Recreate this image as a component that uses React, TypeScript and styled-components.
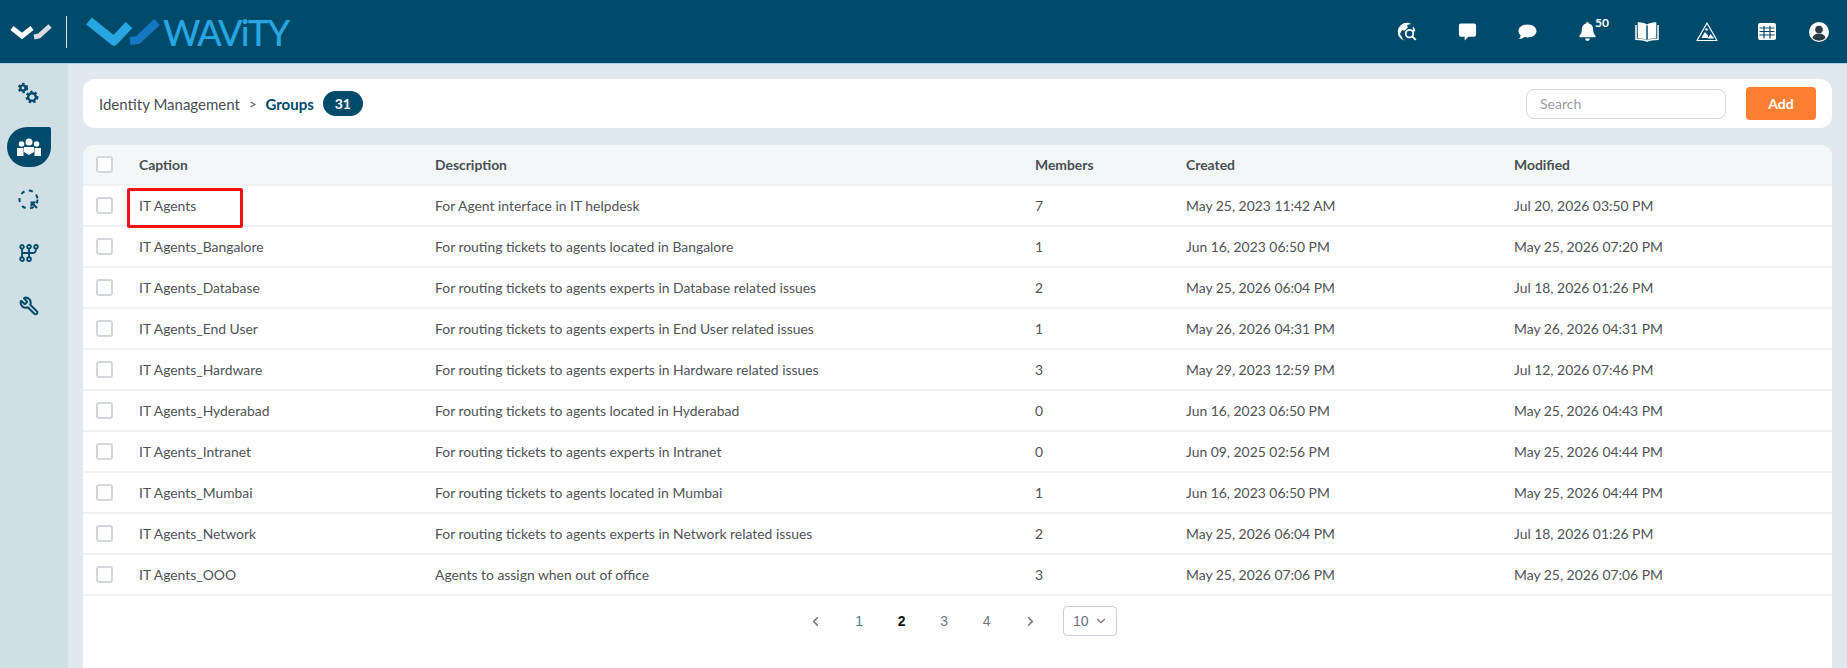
import React from 'react'
import styled, { createGlobalStyle } from 'styled-components'
import { ChevronLeft, ChevronRight, ChevronDown, Wrench } from 'lucide-react'

const GlobalStyle = createGlobalStyle`
  html, body { margin: 0; padding: 0; height: 100%; }
  body { font-family: Lato, "Open Sans", sans-serif; background: #e0e9ef; overflow: hidden; }
  * { box-sizing: border-box; }
`

const Page = styled.div`
  width: 1847px;
  height: 668px;
  display: flex;
  flex-direction: column;
  overflow: hidden;
`

const TopBar = styled.header`
  height: 64px;
  flex: none;
  background: #004b6b;
  border-bottom: 1px solid #a9d6e8;
  display: flex;
  align-items: center;
  justify-content: space-between;
  padding: 0 16px 0 10px;
`

const LogoGroup = styled.div`
  display: flex;
  align-items: center;
`

const LogoDivider = styled.div`
  width: 1px;
  height: 32px;
  background: #d5dde2;
  margin: 0 19px 0 14px;
`

const BrandName = styled.span`
  font-family: Lato, sans-serif;
  font-size: 36px;
  font-weight: 500;
  line-height: 40px;
  letter-spacing: -1.7px;
  color: #27a6e1;
  margin-left: 3px;
`

const IconBar = styled.div`
  display: flex;
  align-items: center;
  height: 100%;
`

const TopIcon = styled.div<{ $left: number }>`
  width: 24px;
  height: 24px;
  margin-left: ${p => p.$left}px;
  position: relative;
  display: flex;
  align-items: center;
  justify-content: center;
`

const BellCount = styled.span`
  position: absolute;
  left: 20px;
  top: -5px;
  font-size: 12px;
  font-weight: 700;
  color: #fff;
`

const Body = styled.div`
  flex: 1;
  display: flex;
  min-height: 0;
`

const SideBar = styled.nav`
  width: 68px;
  flex: none;
  background: #d0dee5;
  display: flex;
  flex-direction: column;
  align-items: flex-start;
  padding-top: 10px;
  gap: 13px;
`

const SideItem = styled.div<{ $active?: boolean }>`
  width: 44px;
  height: 40px;
  margin-left: 7px;
  display: flex;
  align-items: center;
  justify-content: center;
  color: #004b6b;
  background: ${p => (p.$active ? '#004b6b' : 'transparent')};
  border-radius: 20px 2px 20px 20px;
`

const FlippedWrench = styled(Wrench)`
  transform: scaleX(-1);
`

const Main = styled.main`
  flex: 1;
  padding: 15px 15px 0;
  display: flex;
  flex-direction: column;
  gap: 17px;
  min-width: 0;
`

const HeaderCard = styled.div`
  height: 49px;
  flex: none;
  background: #fff;
  border-radius: 12px;
  display: flex;
  align-items: center;
  padding: 0 16px;
`

const Crumb = styled.span`
  font-size: 15px;
  color: #4a4f55;
`

const CrumbSep = styled.span`
  font-size: 13px;
  color: #4a4f55;
  margin: 0 9px 0 9px;
`

const CrumbCurrent = styled.span`
  font-size: 15px;
  font-weight: 700;
  color: #004b6b;
`

const CountBadge = styled.span`
  margin-left: 9px;
  width: 40px;
  height: 25px;
  border-radius: 13px;
  background: #004b6b;
  color: #fff;
  font-size: 14px;
  font-weight: 700;
  display: flex;
  align-items: center;
  justify-content: center;
`

const SearchInput = styled.input`
  margin-left: auto;
  width: 200px;
  height: 30px;
  border: 1px solid #d3d6da;
  border-radius: 8px;
  padding: 0 13px;
  font-family: inherit;
  font-size: 14px;
  color: #4a4f55;
  outline: none;
  &::placeholder { color: #9a9ea3; }
`

const AddButton = styled.button`
  margin-left: 20px;
  width: 70px;
  height: 33px;
  border: none;
  border-radius: 4px;
  background: #ff7f32;
  color: #fff;
  font-family: inherit;
  font-size: 14px;
  font-weight: 700;
`

const TableCard = styled.section`
  flex: 1;
  background: #fff;
  border-radius: 12px 12px 0 0;
  overflow: hidden;
`

const Row = styled.div<{ $head?: boolean }>`
  display: grid;
  grid-template-columns: 56px 296px 600px 151px 328px 1fr;
  align-items: center;
  height: 41px;
  background: ${p => (p.$head ? '#f3f7f8' : '#fff')};
  border-bottom: 2px solid #edf1f4;
  font-size: 13.9px;
  color: ${p => (p.$head ? '#4a4f55' : '#4f5358')};
  font-weight: ${p => (p.$head ? 700 : 400)};
`

const Box = styled.span`
  width: 17px;
  height: 17px;
  margin-left: 13px;
  border: 2px solid #d3d7dc;
  border-radius: 3px;
  background: #fff;
  display: block;
`

const CaptionCell = styled.div`
  position: relative;
`

const Highlight = styled.div`
  position: absolute;
  left: -12px;
  top: -9px;
  width: 116px;
  height: 40px;
  border: 3px solid #f50f16;
  border-radius: 2px;
`

const Pager = styled.div`
  display: flex;
  align-items: center;
  justify-content: center;
  padding: 10px 0 0 0;
  margin-left: -5px;
  font-family: "Liberation Sans", Arial, sans-serif;
`

const PageArrow = styled.span`
  width: 45px;
  display: flex;
  justify-content: center;
  color: #6d7480;
`

const PageNumber = styled.span<{ $current?: boolean; $link?: boolean }>`
  width: 42.5px;
  text-align: center;
  font-size: 14px;
  font-weight: ${p => (p.$current ? 700 : 400)};
  color: ${p => (p.$current ? '#111' : p.$link ? '#4a7a96' : '#6d7480')};
`

const PageSize = styled.div`
  width: 54px;
  height: 30px;
  margin-left: 10px;
  border: 1px solid #c9ced8;
  border-radius: 4px;
  padding: 0 8px 0 9px;
  display: flex;
  align-items: center;
  justify-content: space-between;
  font-size: 14px;
  color: #6d7480;
`

type Group = { caption: string; description: string; members: number; created: string; modified: string }

const groups: Group[] = [
  { caption: 'IT Agents', description: 'For Agent interface in IT helpdesk', members: 7, created: 'May 25, 2023 11:42 AM', modified: 'Jul 20, 2026 03:50 PM' },
  { caption: 'IT Agents_Bangalore', description: 'For routing tickets to agents located in Bangalore', members: 1, created: 'Jun 16, 2023 06:50 PM', modified: 'May 25, 2026 07:20 PM' },
  { caption: 'IT Agents_Database', description: 'For routing tickets to agents experts in Database related issues', members: 2, created: 'May 25, 2026 06:04 PM', modified: 'Jul 18, 2026 01:26 PM' },
  { caption: 'IT Agents_End User', description: 'For routing tickets to agents experts in End User related issues', members: 1, created: 'May 26, 2026 04:31 PM', modified: 'May 26, 2026 04:31 PM' },
  { caption: 'IT Agents_Hardware', description: 'For routing tickets to agents experts in Hardware related issues', members: 3, created: 'May 29, 2023 12:59 PM', modified: 'Jul 12, 2026 07:46 PM' },
  { caption: 'IT Agents_Hyderabad', description: 'For routing tickets to agents located in Hyderabad', members: 0, created: 'Jun 16, 2023 06:50 PM', modified: 'May 25, 2026 04:43 PM' },
  { caption: 'IT Agents_Intranet', description: 'For routing tickets to agents experts in Intranet', members: 0, created: 'Jun 09, 2025 02:56 PM', modified: 'May 25, 2026 04:44 PM' },
  { caption: 'IT Agents_Mumbai', description: 'For routing tickets to agents located in Mumbai', members: 1, created: 'Jun 16, 2023 06:50 PM', modified: 'May 25, 2026 04:44 PM' },
  { caption: 'IT Agents_Network', description: 'For routing tickets to agents experts in Network related issues', members: 2, created: 'May 25, 2026 06:04 PM', modified: 'Jul 18, 2026 01:26 PM' },
  { caption: 'IT Agents_OOO', description: 'Agents to assign when out of office', members: 3, created: 'May 25, 2026 07:06 PM', modified: 'May 25, 2026 07:06 PM' },
]

const SmallLogo = () => (
  <svg width="42" height="18" viewBox="0 0 42 18">
    <path d="M2 5l10 8 10-8" fill="none" stroke="#fff" strokeWidth="5" />
    <path d="M24 14l5-1 11-10" fill="none" stroke="#d8dcdf" strokeWidth="5" />
  </svg>
)

const BrandMark = () => (
  <svg width="74" height="30" viewBox="0 0 74 30">
    <path d="M3 4l25 20L43 8" fill="none" stroke="#27a6e1" strokeWidth="9" strokeLinejoin="round" />
    <path d="M44 24l8-1L71 5" fill="none" stroke="#1577c2" strokeWidth="8" />
  </svg>
)

const Gear = ({ x, y, r }: { x: number; y: number; r: number }) => (
  <g stroke="#004b6b">
    <circle cx={x} cy={y} r={r} strokeWidth="2.4" />
    <circle cx={x} cy={y} r={r + 1.6} strokeWidth="2" strokeDasharray="2.4 2.2" />
  </g>
)

const topIcons: { left: number; el: React.ReactNode; badge?: string }[] = [
  { left: 0, el: (
    <svg width="20" height="20" viewBox="0 0 24 24" fill="#fff">
      <path d="M12 1a11 11 0 0 0-3 21.6c-2-1.6-3-3-3-4.600L3.500 14.500 6 9.500l3 1 4-4-1-3 5-1A11 11 0 0 0 12 1z" />
      <circle cx="15" cy="14" r="4.500" fill="none" stroke="#fff" strokeWidth="2.200" />
      <path d="M18 17l4.500 4.500" stroke="#fff" strokeWidth="2.400" />
      <path d="M19 5a9 9 0 0 1 3 6l-3 .5z" />
    </svg>
  ) },
  { left: 36, el: (
    <svg width="19" height="20" viewBox="0 0 20 20" fill="#fff">
      <path d="M3 1h14a2 2 0 0 1 2 2v10a2 2 0 0 1-2 2h-6l-4 4v-4H3a2 2 0 0 1-2-2V3a2 2 0 0 1 2-2z" />
    </svg>
  ) },
  { left: 36, el: (
    <svg width="20" height="18" viewBox="0 0 20 18" fill="#fff">
      <path d="M10.500 1.500c5 0 9 2.800 9 6.500s-4 6.500-9 6.500c-1 0-2-.1-3-.4-1.500 1.300-3.500 2-6 2 1.300-1 2-2.300 2.200-3.700C2.400 11.100 1.500 9.600 1.500 8c0-3.700 4-6.500 9-6.500z" />
    </svg>
  ) },
  { left: 36, el: (
    <svg width="17" height="19" viewBox="0 0 18 20" fill="#fff">
      <path d="M9 0a1.500 1.500 0 0 1 1.500 1.600C13.500 2.400 15 4.800 15 8c0 3.500 1 5 2.500 6.500V16H.5v-1.500C2 13 3 11.500 3 8c0-3.200 1.500-5.600 4.500-6.400A1.500 1.500 0 0 1 9 0z" />
      <path d="M6.500 17.500h5a2.500 2.500 0 0 1-5 0z" />
    </svg>
  ), badge: '50' },
  { left: 36, el: (
    <svg width="24" height="20" viewBox="0 0 24 20" fill="none" stroke="#fff" strokeWidth="1.500">
      <path d="M12 3.500C10 1.800 6.500 1 3.500 1v14.500c3 0 6.500.5 8.500 2.300 2-1.800 5.500-2.300 8.500-2.300V1c-3 0-6.500.8-8.500 2.500z" fill="#fff" />
      <path d="M12 3.500v14.300" stroke="#004b6b" />
      <path d="M1 3v14.200c4 0 8 .4 11 2 3-1.600 7-2 11-2V3" />
    </svg>
  ) },
  { left: 36, el: (
    <svg width="22" height="20" viewBox="0 0 22 20" fill="none" stroke="#fff" strokeWidth="1.200">
      <path d="M11 1L21 18.500H1z" strokeLinejoin="round" />
      <circle cx="10.500" cy="7.500" r="1.300" fill="#fff" stroke="none" />
      <path d="M6 16l3-5 2 2 1 3M13 16l1.500-3 2.500 3z" fill="#fff" />
    </svg>
  ) },
  { left: 36, el: (
    <svg width="18" height="17" viewBox="0 0 18 17" fill="#fff">
      <path d="M2 0h14a2 2 0 0 1 2 2v13a2 2 0 0 1-2 2H2a2 2 0 0 1-2-2V2a2 2 0 0 1 2-2z" />
      <path d="M1.500 5h15M1.500 8.500h15M1.500 12h15M6 3v12.500M12 3v12.500" stroke="#004b6b" strokeWidth="1.200" />
    </svg>
  ) },
  { left: 28, el: (
    <svg width="20" height="20" viewBox="0 0 20 20">
      <circle cx="10" cy="10" r="10" fill="#fff" />
      <circle cx="10" cy="7.500" r="3.800" fill="#2c3a44" />
      <path d="M3.500 16c.5-3 3-4.500 6.500-4.500s6 1.500 6.500 4.500a9 9 0 0 1-13 0z" fill="#2c3a44" />
    </svg>
  ) },
]

const App = () => {
  return (
    <Page>
      <GlobalStyle />
      <TopBar>
        <LogoGroup>
          <SmallLogo />
          <LogoDivider />
          <BrandMark />
          <BrandName>WAViTY</BrandName>
        </LogoGroup>
        <IconBar>
          {topIcons.map((icon, i) => (
            <TopIcon key={i} $left={icon.left}>
              {icon.el}
              {icon.badge && <BellCount>{icon.badge}</BellCount>}
            </TopIcon>
          ))}
        </IconBar>
      </TopBar>
      <Body>
        <SideBar>
          <SideItem>
            <svg width="24" height="24" viewBox="0 0 24 24" fill="none">
              <Gear x={6} y={6} r={2.6} />
              <Gear x={15} y={15} r={3.8} />
            </svg>
          </SideItem>
          <SideItem $active>
            <svg width="24" height="18" viewBox="0 0 24 18" fill="#fff">
              <circle cx="12" cy="4" r="3.500" />
              <circle cx="4.500" cy="6" r="2.800" />
              <circle cx="19.500" cy="6" r="2.800" />
              <path d="M0 10h6.500v8H0zM17.500 10H24v8h-6.500zM7 9h10v5l-5 3-5-3z" />
            </svg>
          </SideItem>
          <SideItem>
            <svg width="22" height="22" viewBox="0 0 22 22" fill="none" stroke="#004b6b" strokeWidth="2">
              <circle cx="10.500" cy="10.500" r="9" strokeDasharray="4 4.500" />
              <path d="M14 14l5 5" strokeWidth="2" />
              <path d="M12.500 12.500h6l-6 6z" fill="#004b6b" stroke="none" />
            </svg>
          </SideItem>
          <SideItem>
            <svg width="22" height="18" viewBox="0 0 24 22" fill="none" stroke="#004b6b" strokeWidth="2.200">
              <circle cx="3.500" cy="3.500" r="2.300" />
              <circle cx="12" cy="3.500" r="2.300" />
              <circle cx="20.500" cy="3.500" r="2.300" />
              <circle cx="3.500" cy="18.500" r="2.300" />
              <circle cx="12" cy="18.500" r="2.300" />
              <path d="M3.500 6v10M12 6v10M20.500 6c0 4-2 5-4 5H3.500" />
            </svg>
          </SideItem>
          <SideItem>
            <FlippedWrench size={20} strokeWidth={2.4} />
          </SideItem>
        </SideBar>
        <Main>
          <HeaderCard>
            <Crumb>Identity Management</Crumb>
            <CrumbSep>&gt;</CrumbSep>
            <CrumbCurrent>Groups</CrumbCurrent>
            <CountBadge>31</CountBadge>
            <SearchInput placeholder="Search" />
            <AddButton>Add</AddButton>
          </HeaderCard>
          <TableCard>
            <Row $head>
              <Box />
              <div>Caption</div>
              <div>Description</div>
              <div>Members</div>
              <div>Created</div>
              <div>Modified</div>
            </Row>
            {groups.map((group, i) => (
              <Row key={group.caption}>
                <Box />
                <CaptionCell>
                  {group.caption}
                  {i === 0 && <Highlight />}
                </CaptionCell>
                <div>{group.description}</div>
                <div>{group.members}</div>
                <div>{group.created}</div>
                <div>{group.modified}</div>
              </Row>
            ))}
            <Pager>
              <PageArrow><ChevronLeft size={15} strokeWidth={2.500} /></PageArrow>
              <PageNumber $link>1</PageNumber>
              <PageNumber $current>2</PageNumber>
              <PageNumber>3</PageNumber>
              <PageNumber>4</PageNumber>
              <PageArrow><ChevronRight size={15} strokeWidth={2.500} /></PageArrow>
              <PageSize>10<ChevronDown size={14} /></PageSize>
            </Pager>
          </TableCard>
        </Main>
      </Body>
    </Page>
  )
}

export default App
